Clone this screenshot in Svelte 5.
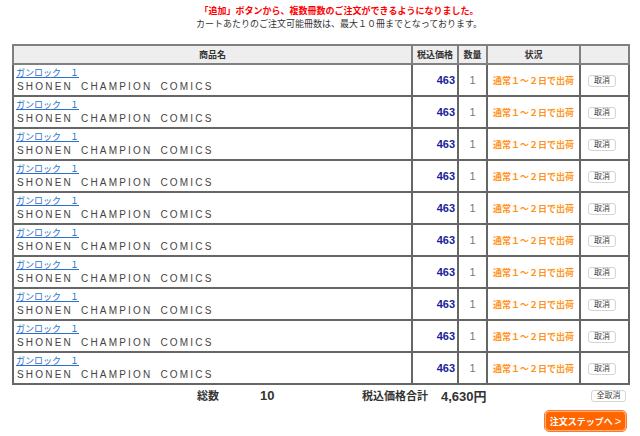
<script>
  const rows = Array.from({ length: 10 }, (_, i) => ({ id: i + 1, title: "ガンロック　１", label: "SHONEN CHAMPION COMICS", price: 463, qty: 1, status: "通常１〜２日で出荷" }));
</script>

<div class="page">
  <div class="notice">
    <p class="red">「追加」ボタンから、複数冊数のご注文ができるようになりました。</p>
    <p>カートあたりのご注文可能冊数は、最大１０冊までとなっております。</p>
  </div>

  <table class="cart">
    <thead>
      <tr>
        <th>商品名</th>
        <th>税込価格</th>
        <th>数量</th>
        <th>状況</th>
        <th></th>
      </tr>
    </thead>
    <tbody>
      {#each rows as row (row.id)}
        <tr>
          <td class="name">
            <a href="#top">{row.title}</a>
            <div class="label">{row.label}</div>
          </td>
          <td class="price">{row.price}</td>
          <td class="qty">{row.qty}</td>
          <td class="status">{row.status}</td>
          <td class="action"><button class="small">取消</button></td>
        </tr>
      {/each}
    </tbody>
  </table>

  <div class="totals">
    <span class="count-label">総数</span>
    <span class="count">10</span>
    <span class="sum-label">税込価格合計</span>
    <span class="sum">4,630円</span>
    <button class="small all">全取消</button>
  </div>

  <div class="next">
    <button class="step">注文ステップへ<span class="arrow">&gt;</span></button>
  </div>
</div>

<style>
  :global(body) {
    margin: 0;
    background: #fff;
    font-family: "Liberation Sans", "Noto Sans CJK JP", sans-serif;
    color: #333;
  }
  .page {
    width: 640px;
    height: 436px;
    overflow: hidden;
    padding-top: 5px;
    box-sizing: border-box;
  }
  .notice {
    text-align: center;
    font-size: 9px;
    line-height: 13px;
    height: 39px;
    padding-left: 38px;
  }
  .notice p {
    margin: 0;
  }
  .red {
    color: #f00;
    font-weight: bold;
  }
  .cart {
    margin-left: 12px;
    width: 618px;
    border-collapse: collapse;
    table-layout: fixed;
    border: 2px solid #808080;
    font-size: 9px;
  }
  th, td {
    border: 2px solid #666;
    padding: 0;
  }
  th {
    height: 17px;
    background: #eee;
    font-size: 9px;
    font-weight: bold;
    border-color: #808080;
  }
  th:nth-child(1) { width: 397px; }
  th:nth-child(2) { width: 44px; }
  th:nth-child(3) { width: 27px; }
  th:nth-child(4) { width: 91px; }
  td {
    height: 30px;
  }
  .name {
    padding-left: 2px;
    line-height: 13px;
  }
  .name a {
    color: #2a6fc9;
    font-size: 9px;
    text-decoration: underline;
    display: block;
    height: 13px;
  }
  .label {
    font-size: 10px;
    letter-spacing: 2.2px;
    word-spacing: 3px;
    padding-left: 1px;
    color: #444;
  }
  .price {
    text-align: right;
    padding-right: 2px;
    color: #1a1a9c;
    font-size: 11px;
    font-weight: bold;
  }
  .qty {
    text-align: center;
    color: #777;
    font-size: 11px;
  }
  .status {
    text-align: center;
    color: #ff9420;
    font-size: 9px;
    font-weight: bold;
  }
  .action {
    text-align: center;
    padding-right: 5px;
  }
  .small {
    width: 28px;
    height: 12px;
    margin-top: 1px;
    padding: 0;
    background: #fff;
    border: 1px solid #d4d4d4;
    border-radius: 3px;
    font-family: inherit;
    font-size: 8px;
    line-height: 10px;
    color: #444;
  }
  .totals {
    display: flex;
    align-items: center;
    height: 20px;
    font-size: 11px;
    font-weight: bold;
  }
  .count-label { margin-left: 197px; width: 63px; }
  .count { width: 102px; font-size: 13px; }
  .sum-label { width: 79px; }
  .sum { width: 150px; font-size: 13px; }
  .all { width: 35px; height: 12px; margin-top: 2px; }
  .next {
    display: flex;
    justify-content: flex-end;
    padding-right: 14px;
    margin-top: 6px;
  }
  .step {
    display: flex;
    align-items: center;
    justify-content: center;
    gap: 2px;
    width: 81px;
    height: 20px;
    padding: 0;
    background: #ff6600;
    border: 1px solid #ffb080;
    outline: 1px solid #ff7a20;
    border-radius: 4px;
    color: #fff;
    font-family: inherit;
    font-size: 9px;
    font-weight: bold;
  }
  .arrow {
    font-size: 11px;
    font-weight: normal;
  }
</style>
